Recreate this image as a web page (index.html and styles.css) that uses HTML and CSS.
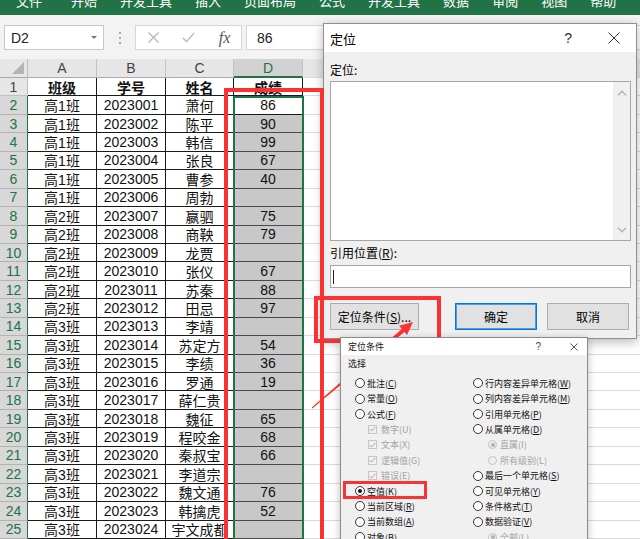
FILE: index.html
```html
<!DOCTYPE html>
<html lang="zh-CN">
<head>
<meta charset="utf-8">
<title>定位条件</title>
<link rel="stylesheet" href="styles.css">
</head>
<body>
<div class="ribbon">
  <div class="tabs">
    <span class="tab first">文件</span><span class="tab">开始</span><span class="tab">开发工具</span><span class="tab">插入</span><span class="tab">页面布局</span><span class="tab">公式</span><span class="tab">开发工具</span><span class="tab">数据</span><span class="tab">审阅</span><span class="tab">视图</span><span class="tab">帮助</span>
  </div>
</div>
<div class="fbar">
  <div class="namebox"><span>D2</span><span class="nb-arrow"></span></div>
  <div class="vdots"><i></i><i></i><i></i></div>
  <div class="fbtns">
    <span class="fslot"><svg width="11" height="11" viewBox="0 0 11 11"><path d="M0.5 0.5L10.5 10.5M10.5 0.5L0.5 10.5" stroke="#b4b4b4" stroke-width="1.2" fill="none"/></svg></span>
    <span class="fslot"><svg width="13" height="11" viewBox="0 0 13 11"><path d="M0.8 5.8L4.5 9.6L12.2 1" stroke="#bdbdbd" stroke-width="1.4" fill="none"/></svg></span>
    <span class="fslot fx">fx</span>
  </div>
  <div class="finput">86</div>
</div>

<div class="sheet">
  <div class="corner"></div><div class="ch">A</div><div class="ch">B</div><div class="ch">C</div><div class="ch sel">D</div><div class="ch rest"></div>

  <div class="rh">1</div><div class="c b">班级</div><div class="c b">学号</div><div class="c b">姓名</div><div class="c b">成绩</div><div class="rest"></div>
  <div class="rh sel">2</div><div class="c">高1班</div><div class="c">2023001</div><div class="c">萧何</div><div class="c">86</div><div class="rest"></div>
  <div class="rh sel">3</div><div class="c">高1班</div><div class="c">2023002</div><div class="c">陈平</div><div class="c g">90</div><div class="rest"></div>
  <div class="rh sel">4</div><div class="c">高1班</div><div class="c">2023003</div><div class="c">韩信</div><div class="c g">99</div><div class="rest"></div>
  <div class="rh sel">5</div><div class="c">高1班</div><div class="c">2023004</div><div class="c">张良</div><div class="c g">67</div><div class="rest"></div>
  <div class="rh sel">6</div><div class="c">高1班</div><div class="c">2023005</div><div class="c">曹参</div><div class="c g">40</div><div class="rest"></div>
  <div class="rh sel">7</div><div class="c">高1班</div><div class="c">2023006</div><div class="c">周勃</div><div class="c g"></div><div class="rest"></div>
  <div class="rh sel">8</div><div class="c">高2班</div><div class="c">2023007</div><div class="c">嬴驷</div><div class="c g">75</div><div class="rest"></div>
  <div class="rh sel">9</div><div class="c">高2班</div><div class="c">2023008</div><div class="c">商鞅</div><div class="c g">79</div><div class="rest"></div>
  <div class="rh sel">10</div><div class="c">高2班</div><div class="c">2023009</div><div class="c">龙贾</div><div class="c g"></div><div class="rest"></div>
  <div class="rh sel">11</div><div class="c">高2班</div><div class="c">2023010</div><div class="c">张仪</div><div class="c g">67</div><div class="rest"></div>
  <div class="rh sel">12</div><div class="c">高2班</div><div class="c">2023011</div><div class="c">苏秦</div><div class="c g">88</div><div class="rest"></div>
  <div class="rh sel">13</div><div class="c">高2班</div><div class="c">2023012</div><div class="c">田忌</div><div class="c g">97</div><div class="rest"></div>
  <div class="rh sel">14</div><div class="c">高3班</div><div class="c">2023013</div><div class="c">李靖</div><div class="c g"></div><div class="rest"></div>
  <div class="rh sel">15</div><div class="c">高3班</div><div class="c">2023014</div><div class="c">苏定方</div><div class="c g">54</div><div class="rest"></div>
  <div class="rh sel">16</div><div class="c">高3班</div><div class="c">2023015</div><div class="c">李绩</div><div class="c g">36</div><div class="rest"></div>
  <div class="rh sel">17</div><div class="c">高3班</div><div class="c">2023016</div><div class="c">罗通</div><div class="c g">19</div><div class="rest"></div>
  <div class="rh sel">18</div><div class="c">高3班</div><div class="c">2023017</div><div class="c">薛仁贵</div><div class="c g"></div><div class="rest"></div>
  <div class="rh sel">19</div><div class="c">高3班</div><div class="c">2023018</div><div class="c">魏征</div><div class="c g">65</div><div class="rest"></div>
  <div class="rh sel">20</div><div class="c">高3班</div><div class="c">2023019</div><div class="c">程咬金</div><div class="c g">68</div><div class="rest"></div>
  <div class="rh sel">21</div><div class="c">高3班</div><div class="c">2023020</div><div class="c">秦叔宝</div><div class="c g">66</div><div class="rest"></div>
  <div class="rh sel">22</div><div class="c">高3班</div><div class="c">2023021</div><div class="c">李道宗</div><div class="c g"></div><div class="rest"></div>
  <div class="rh sel">23</div><div class="c">高3班</div><div class="c">2023022</div><div class="c">魏文通</div><div class="c g">76</div><div class="rest"></div>
  <div class="rh sel">24</div><div class="c">高3班</div><div class="c">2023023</div><div class="c">韩擒虎</div><div class="c g">52</div><div class="rest"></div>
  <div class="rh sel">25</div><div class="c">高3班</div><div class="c">2023024</div><div class="c">宇文成都</div><div class="c g"></div><div class="rest"></div>

  <div class="selbox"></div>
</div>

<div class="dlg1">
  <div class="d1-title">
    <span>定位</span>
    <span class="d1-q">?</span>
    <svg class="d1-x" width="12" height="12" viewBox="0 0 12 12"><path d="M0.5 0.5L11.5 11.5M11.5 0.5L0.5 11.5" stroke="#333" stroke-width="1" fill="none"/></svg>
  </div>
  <div class="d1-body">
    <div class="d1-label">定位:</div>
    <div class="listbox">
      <div class="lb-scroll">
        <svg width="10" height="6" viewBox="0 0 10 6"><path d="M1 5.2L5 1.2L9 5.2" stroke="#b0b0b0" stroke-width="1.3" fill="none"/></svg>
        <svg width="10" height="6" viewBox="0 0 10 6"><path d="M1 0.8L5 4.8L9 0.8" stroke="#b0b0b0" stroke-width="1.3" fill="none"/></svg>
      </div>
    </div>
    <div class="d1-label second">引用位置(<u>R</u>):</div>
    <div class="refinput"><span class="caret"></span></div>
    <div class="d1-buttons">
      <div class="btn special">定位条件(<u>S</u>)...</div>
      <div class="btn ok">确定</div>
      <div class="btn">取消</div>
    </div>
  </div>
</div>

<svg class="annot" width="640" height="539" viewBox="0 0 640 539">
  <rect x="226" y="90" width="96" height="500" fill="none" stroke="#fb3232" stroke-width="4"/>
  <rect x="316" y="298" width="123" height="43" fill="none" stroke="#fb3232" stroke-width="4"/>
  <polygon points="311.7,407.6 401.8,328.9 399.2,325.8 413,322 407,335 404.4,331.9 312.3,408.4" fill="#fb3232"/>
</svg>

<div class="dlg2">
  <div class="d2-title">
    <span>定位条件</span>
    <span class="d2-q">?</span>
    <svg class="d2-x" width="8" height="8" viewBox="0 0 8 8"><path d="M0.5 0.5L7.5 7.5M7.5 0.5L0.5 7.5" stroke="#444" stroke-width="0.9" fill="none"/></svg>
  </div>
  <div class="d2-group">选择</div>
  <div class="opts">
    <div class="opt"><span class="rb"></span><span>批注(<u>C</u>)</span></div>
    <div class="opt"><span class="rb"></span><span>常量(<u>O</u>)</span></div>
    <div class="opt"><span class="rb"></span><span>公式(<u>F</u>)</span></div>
    <div class="opt sub dis"><span class="cb"><svg width="7" height="6" viewBox="0 0 7 6"><path d="M0.6 3L2.6 5L6.4 0.8" stroke="#a8a8a8" stroke-width="1" fill="none"/></svg></span><span>数字(U)</span></div>
    <div class="opt sub dis"><span class="cb"><svg width="7" height="6" viewBox="0 0 7 6"><path d="M0.6 3L2.6 5L6.4 0.8" stroke="#a8a8a8" stroke-width="1" fill="none"/></svg></span><span>文本(X)</span></div>
    <div class="opt sub dis"><span class="cb"><svg width="7" height="6" viewBox="0 0 7 6"><path d="M0.6 3L2.6 5L6.4 0.8" stroke="#a8a8a8" stroke-width="1" fill="none"/></svg></span><span>逻辑值(G)</span></div>
    <div class="opt sub dis"><span class="cb"><svg width="7" height="6" viewBox="0 0 7 6"><path d="M0.6 3L2.6 5L6.4 0.8" stroke="#a8a8a8" stroke-width="1" fill="none"/></svg></span><span>错误(E)</span></div>
    <div class="opt"><span class="rb on"></span><span>空值(<u>K</u>)</span></div>
    <div class="opt"><span class="rb"></span><span>当前区域(<u>R</u>)</span></div>
    <div class="opt"><span class="rb"></span><span>当前数组(<u>A</u>)</span></div>
    <div class="opt"><span class="rb"></span><span>对象(<u>B</u>)</span></div>

    <div class="opt"><span class="rb"></span><span>行内容差异单元格(<u>W</u>)</span></div>
    <div class="opt"><span class="rb"></span><span>列内容差异单元格(<u>M</u>)</span></div>
    <div class="opt"><span class="rb"></span><span>引用单元格(<u>P</u>)</span></div>
    <div class="opt"><span class="rb"></span><span>从属单元格(<u>D</u>)</span></div>
    <div class="opt rsub dis"><span class="rb on"></span><span>直属(I)</span></div>
    <div class="opt rsub dis"><span class="rb"></span><span>所有级别(L)</span></div>
    <div class="opt"><span class="rb"></span><span>最后一个单元格(<u>S</u>)</span></div>
    <div class="opt"><span class="rb"></span><span>可见单元格(<u>Y</u>)</span></div>
    <div class="opt"><span class="rb"></span><span>条件格式(<u>T</u>)</span></div>
    <div class="opt"><span class="rb"></span><span>数据验证(<u>V</u>)</span></div>
    <div class="opt rsub dis"><span class="rb on"></span><span>全部(L)</span></div>
  </div>
</div>

<div class="kbox"></div>
</body>
</html>
```

FILE: styles.css
```css
* { box-sizing: border-box; margin: 0; padding: 0; }
html, body { width: 640px; height: 539px; overflow: hidden; }
body {
  position: relative;
  background: #fff;
  font-family: "Liberation Sans", "Noto Sans CJK SC", sans-serif;
  color: #000;
}

/* ribbon */
.ribbon { height: 15px; background: #217346; overflow: hidden; }
.tabs {
  display: flex; gap: 23px; padding-left: 16px; margin-top: -6px;
  color: #fff; font-size: 13px; line-height: 14px;
  font-family: "Noto Sans CJK SC", sans-serif; white-space: nowrap;
}
.tab.first { margin-right: 6px; }

/* formula bar */
.fbar { height: 44px; background: #f3f3f3; display: flex; align-items: flex-start; padding-top: 10px; }
.namebox {
  margin-left: 4px; width: 100px; height: 25px; background: #fff; border: 1px solid #c8c8c8;
  display: flex; align-items: center; padding-left: 6px; font-size: 14px; color: #222;
}
.nb-arrow {
  margin-left: auto; margin-right: 6px; width: 0; height: 0;
  border-left: 3px solid transparent; border-right: 3px solid transparent; border-top: 3px solid #777;
}
.vdots { width: 31px; display: flex; flex-direction: column; align-items: center; gap: 3px; padding-top: 7px; }
.vdots i { display: block; width: 2px; height: 2px; background: #a8a8a8; }
.fbtns { width: 107px; height: 25px; background: #fff; border: 1px solid #d6d6d6; display: flex; align-items: center; }
.fslot { width: 35px; display: flex; justify-content: center; align-items: center; }
.fx { font-family: "Liberation Serif", serif; font-style: italic; font-size: 16px; color: #555; padding-left: 2px; }
.finput {
  margin-left: 4px; flex: 1; height: 25px; background: #fff; border: 1px solid #d6d6d6; border-right: none;
  padding-left: 10px; font-size: 14px; display: flex; align-items: center; color: #222;
}

/* sheet */
.sheet {
  position: relative; display: grid;
  grid-template-columns: 28px 69px 69px 68px 69px 1fr;
  grid-template-rows: 19px; grid-auto-rows: 18.45px;
  font-size: 14px; color: #111;
}
.corner { position: relative; background: #e6e6e6; border-right: 1px solid #bdbdbd; border-bottom: 1px solid #ababab; }
.corner::after {
  content: ""; position: absolute; right: 3px; bottom: 3px; width: 0; height: 0;
  border-left: 12px solid transparent; border-bottom: 12px solid #b4b4b4;
}
.ch {
  background: #e6e6e6; border-right: 1px solid #c4c4c4; border-bottom: 1px solid #ababab;
  display: flex; align-items: center; justify-content: center; color: #444;
}
.ch.sel { background: #d2d2d2; color: #217346; border-bottom: 2px solid #217346; }
.ch.rest { background-color: #e6e6e6; border-right: none;
  background-image: repeating-linear-gradient(to right, transparent 0 68px, #c4c4c4 68px 69px); }
.rh {
  background: #e6e6e6; border-right: 1px solid #bdbdbd; border-bottom: 1px solid #c0c0c0;
  display: flex; align-items: center; justify-content: center; color: #444;
}
.rh.sel { background: #d8d8d8; color: #217346; border-right: 1px solid #217346; border-bottom-color: #b2b2b2; }
.c {
  border-right: 1px solid #1a1a1a; border-bottom: 1px solid #1a1a1a;
  display: flex; align-items: center; justify-content: center;
  white-space: nowrap; overflow: hidden; font-family: "Liberation Sans", "Noto Sans CJK SC", sans-serif;
}
.c.b { font-weight: bold; }
.c.g { background: #c8c8c8; border-bottom-color: #4a4a4a; }
.rest {
  border-bottom: 1px solid #dadada;
  background-image: repeating-linear-gradient(to right, transparent 0 68px, #dadada 68px 69px);
}
.selbox {
  position: absolute; left: 233px; top: 36.5px; width: 71px; height: 445px;
  border: 2px solid #217346; pointer-events: none;
}

/* dialog 1 */
.dlg1 {
  position: absolute; left: 323px; top: 23px; width: 314px; height: 316px;
  background: #f0f0f0; border: 1px solid #8f8f8f; box-shadow: 0 3px 10px rgba(0,0,0,.28);
  font-family: "Noto Sans CJK SC", sans-serif; font-size: 12px; color: #000;
}
.d1-title { height: 28px; background: #fff; display: flex; align-items: center; padding-left: 6px; padding-right: 16px; font-size: 13px; }
.d1-q { margin-left: auto; font-family: "Liberation Sans", sans-serif; font-size: 14px; color: #333; margin-right: 36px; }
.d1-body { padding: 0 5px 0 6px; display: flex; flex-direction: column; }
.d1-label { margin-top: 10px; height: 16px; line-height: 16px; }
.d1-label.second { margin-top: 4px; }
.listbox { margin-top: 3px; height: 160px; background: #fff; border: 1px solid #a6a6a6; display: flex; justify-content: flex-end; }
.lb-scroll { width: 17px; background: #f0f0f0; display: flex; flex-direction: column; justify-content: space-between; align-items: center; padding: 8px 0 7px; }
.refinput { margin-top: 4px; height: 23px; background: #fff; border: 1px solid #a6a6a6; display: flex; align-items: center; padding-left: 2px; }
.caret { width: 1px; height: 14px; background: #222; }
.d1-buttons { margin-top: 15px; display: flex; gap: 10px; }
.btn {
  width: 82px; height: 27px; background: #e1e1e1; border: 1px solid #adadad;
  display: flex; align-items: center; justify-content: center; font-size: 12px;
}
.btn.special { width: 89px; margin-right: 26px; }
.btn.ok { border-color: #0078d7; box-shadow: inset 0 0 0 1px #4b9ee0; }

/* annotations */
.annot { position: absolute; left: 0; top: 0; pointer-events: none; }
.kbox {
  position: absolute; left: 343px; top: 481px; width: 84px; height: 18px;
  border: 3px solid #fb3232; pointer-events: none;
}

/* dialog 2 */
.dlg2 {
  position: absolute; left: 340px; top: 337px; width: 248px; height: 215px;
  background: #f0f0f0; border: 1px solid #8a8a8a; box-shadow: 0 2px 8px rgba(0,0,0,.25);
  font-family: "Noto Sans CJK SC", sans-serif; font-size: 9px; color: #111; overflow: hidden;
}
.d2-title { height: 17px; background: #fff; display: flex; align-items: center; padding-left: 7px; padding-right: 9px; }
.d2-q { margin-left: auto; margin-right: 29px; font-family: "Liberation Sans", sans-serif; font-size: 10px; color: #444; }
.d2-group { margin-top: 3px; padding-left: 7px; height: 12px; line-height: 12px; }
.opts {
  margin-top: 5.6px; padding-left: 14px; display: grid;
  grid-template-columns: 118px 1fr; grid-template-rows: repeat(11, 15.4px); grid-auto-flow: column;
}
.opt { display: flex; align-items: center; gap: 2px; white-space: nowrap; }
.opt u { text-decoration: underline; text-underline-offset: 1px; }
.rb {
  position: relative; width: 10px; height: 10px; border: 1px solid #333; border-radius: 50%; background: #fff; flex: none;
}
.rb.on::after {
  content: ""; position: absolute; left: 2px; top: 2px; width: 4px; height: 4px; border-radius: 50%; background: #111;
}
.opt.sub { padding-left: 13px; gap: 4px; }
.opt.rsub { padding-left: 15px; gap: 3px; }
.opt.dis { color: #a3a3a3; }
.opt.dis .rb { border-color: #c2c2c2; background: #f0f0f0; width: 9px; height: 9px; }
.opt.dis .rb.on::after { background: #b0b0b0; left: 1.5px; top: 1.5px; }
.cb {
  width: 9px; height: 9px; border: 1px solid #c6c6c6; background: #f0f0f0; flex: none;
  display: flex; align-items: center; justify-content: center;
}
```
